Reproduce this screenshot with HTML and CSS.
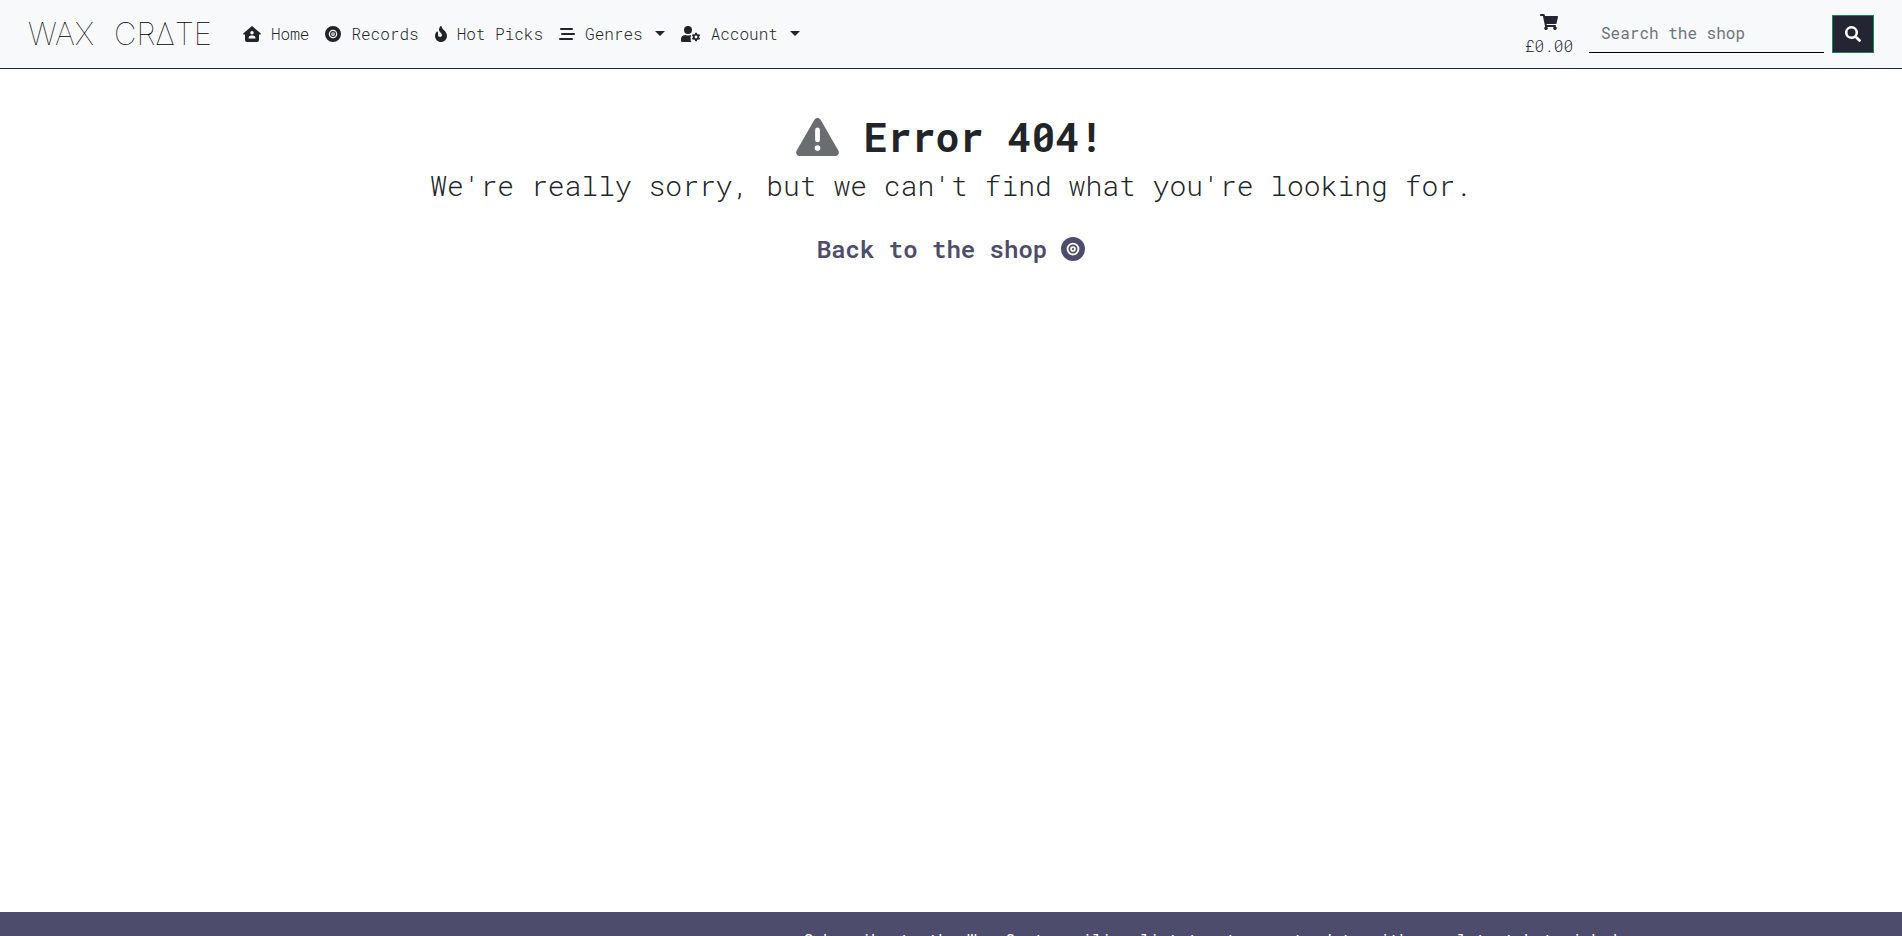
FILE: index.html
```html
<!DOCTYPE html>
<html lang="en">
<head>
<meta charset="utf-8">
<title>Wax Crate</title>
<link rel="stylesheet" href="styles.css">
</head>
<body>
<svg class="sprite" aria-hidden="true">
  <symbol id="record" viewBox="0 0 512 512"><path fill-rule="evenodd" d="M256 0a256 256 0 1 0 0 512 256 256 0 1 0 0-512zM256 120a136 136 0 1 1 0 272 136 136 0 1 1 0-272zM256 160a96 96 0 1 0 0 192 96 96 0 1 0 0-192zM256 196a60 60 0 1 1 0 120 60 60 0 1 1 0-120zM256 232a24 24 0 1 0 0 48 24 24 0 1 0 0-48z"/></symbol>
</svg>
<header class="navbar">
  <a class="brand" href="#" aria-label="Wax Crate"><span>WAX</span> <span>CRΔTE</span></a>
  <nav class="nav">
    <a class="nav-link" href="#"><svg class="icon icon-wide" viewBox="0 0 576 512"><path fill-rule="evenodd" d="M277 6q11-9 22 0l262 228q14 12 10 26-5 14-24 14h-35v174q0 64-64 64H128q-64 0-64-64V274H29q-19 0-24-14-4-14 10-26zM288 160a56 56 0 1 0 0 112 56 56 0 1 0 0-112zM256 304q-72 4-80 80 0 16 16 16h192q16 0 16-16-8-76-80-80z"/></svg>Home</a>
    <a class="nav-link" href="#"><svg class="icon" viewBox="0 0 512 512"><use href="#record"/></svg>Records</a>
    <a class="nav-link" href="#"><svg class="icon icon-narrow" viewBox="0 0 384 512"><path d="M216 24c0-24-31-33-44-13C48 192 224 200 224 288c0 36-29 65-65 64-35 0-63-29-63-65v-85c0-22-26-32-41-16C28 213 0 261 0 320c0 106 86 192 192 192s192-86 192-192c0-170-168-193-168-296z"/></svg>Hot Picks</a>
    <a class="nav-link" href="#"><svg class="icon" viewBox="0 0 512 512"><path d="M64 64h352a32 32 0 0 1 0 64H64a32 32 0 0 1 0-64zM96 224h384a32 32 0 0 1 0 64H96a32 32 0 0 1 0-64zM32 384h384a32 32 0 0 1 0 64H32a32 32 0 0 1 0-64z"/></svg>Genres<span class="caret"></span></a>
    <a class="nav-link" href="#"><svg class="icon icon-user" viewBox="0 0 640 512"><circle cx="224" cy="128" r="128"/><path d="M134 288h16a174 174 0 0 0 148 0h17q-4 28 2 48l-15 34q-10 26 18 46-22 24-12 52l20 36q4 6 10 8H48q-48 0-48-48v-42Q0 300 134 288z"/><path fill-rule="evenodd" d="M452 216h56l8 42 26 15 40-14 28 49-32 28v30l32 28-28 49-40-14-26 15-8 42h-56l-8-42-26-15-40 14-28-49 32-28v-30l-32-28 28-49 40 14 26-15zM480 305a46 46 0 1 0 0 92 46 46 0 1 0 0-92z"/></svg>Account<span class="caret"></span></a>
  </nav>
  <div class="tools">
    <a class="cart" href="#"><svg class="icon icon-wide" viewBox="0 0 576 512"><path d="M528 301l47-208c4-15-8-29-23-29H159l-9-45C148 8 138 0 126 0H24C11 0 0 11 0 24v16c0 13 11 24 24 24h70l70 343a56 56 0 1 0 67 9h210a56 56 0 1 0 64-10l5-25c4-15-8-29-23-29H218l-7-32h294c11 0 21-8 23-19z"/></svg><span>£0.00</span></a>
    <form class="search">
      <input class="search-box" type="search" placeholder="Search the shop" aria-label="Search the shop">
      <button class="search-button" type="button" aria-label="Search"><svg class="icon" viewBox="0 0 512 512"><path fill-rule="evenodd" d="M505 443L405 343q-7-7-17-7h-16a208 208 0 1 0-36 36v16q0 10 7 17l100 100q17 14 34 0l28-28q14-17 0-34zM208 80a128 128 0 1 1 0 256 128 128 0 1 1 0-256z"/></svg></button>
    </form>
  </div>
</header>
<main class="content">
  <h1 class="title"><svg class="warning" viewBox="0 0 576 512"><path fill-rule="evenodd" d="M570 440c18 32-5 72-42 72H48c-37 0-60-40-42-72L246 24c19-32 65-32 84 0zM288 366a38 38 0 1 0 0 76 38 38 0 1 0 0-76zM288 128a32 32 0 0 0-32 32v136a32 32 0 0 0 64 0V160a32 32 0 0 0-32-32z"/></svg>Error 404!</h1>
  <p class="message">We're really sorry, but we can't find what you're looking for.</p>
  <a class="back" href="#">Back to the shop <svg class="icon-back" viewBox="0 0 512 512"><use href="#record"/></svg></a>
</main>
<footer class="footer">
  <p class="subscribe">Subscribe to the Wax Crate mailing list to stay up to date with our latest hot picks!</p>
</footer>
</body>
</html>
```
FILE: styles.css
```css
* { box-sizing: border-box; }
body {
  margin: 0;
  height: 100vh;
  overflow: hidden;
  display: flex;
  flex-direction: column;
  background: #fff;
  color: #212529;
  font: 300 16px/24px "Roboto Mono", "Liberation Mono", monospace;
}
a { color: inherit; text-decoration: none; }
svg { fill: currentColor; }
.sprite { display: none; }
.navbar {
  display: flex;
  align-items: center;
  height: 69px;
  flex: none;
  padding: 0 28px;
  background: #f8f9fa;
  border-bottom: 1px solid #252433;
}
.brand {
  display: flex;
  gap: 20px;
  width: 215px;
  color: #000;
  font: 100 31px/40px Inter, sans-serif;
}
.nav { display: flex; gap: 16px; }
.nav-link { display: flex; align-items: center; gap: 10px; }
.icon { width: 16px; height: 16px; flex: none; color: #212529; }
.icon-wide { width: 18px; }
.icon-narrow { width: 12px; }
.icon-user { width: 20px; }
.caret {
  margin: 0 0 2px 2px;
  border: 5px solid transparent;
  border-top-color: #212529;
  border-bottom: 0;
}
.tools { display: flex; align-items: center; gap: 16px; margin-left: auto; }
.cart { display: flex; flex-direction: column; align-items: center; gap: 4px; padding-top: 4px; color: #252433; }
.cart .icon { color: #252433; }
.search { display: flex; gap: 8px; }
.search-box {
  width: 235px;
  height: 38px;
  padding: 0 12px 2px;
  border: 0;
  border-bottom: 1px solid #000;
  background: transparent;
  font: inherit;
  font-weight: 400;
}
.search-box::placeholder { color: #6c757d; }
.search-button {
  display: grid;
  place-items: center;
  width: 42px;
  height: 38px;
  border: 1px solid #198754;
  background: #252433;
}
.search-button .icon { color: #fff; }
.content {
  flex: 1;
  display: flex;
  flex-direction: column;
  align-items: center;
  padding-top: 44px;
}
.title { display: flex; align-items: center; gap: 24px; margin: 0; padding-right: 2px; font-size: 40px; line-height: 48px; }
.warning { width: 43px; height: 38px; color: #6a6d70; }
.message { margin: 8px 0 30px; font-size: 28px; font-weight: 350; line-height: 34px; }
.back { display: flex; align-items: center; gap: 14px; color: #4e4c6d; font-size: 24px; font-weight: 600; line-height: 32px; }
.icon-back { width: 24px; height: 24px; }
.footer {
  flex: none;
  height: 24px;
  overflow: hidden;
  padding: 16px 282px 0 0;
  background: #4e4c6d;
  color: #fff;
  font-weight: 400;
}
.subscribe { margin: 0; text-align: right; }
```
